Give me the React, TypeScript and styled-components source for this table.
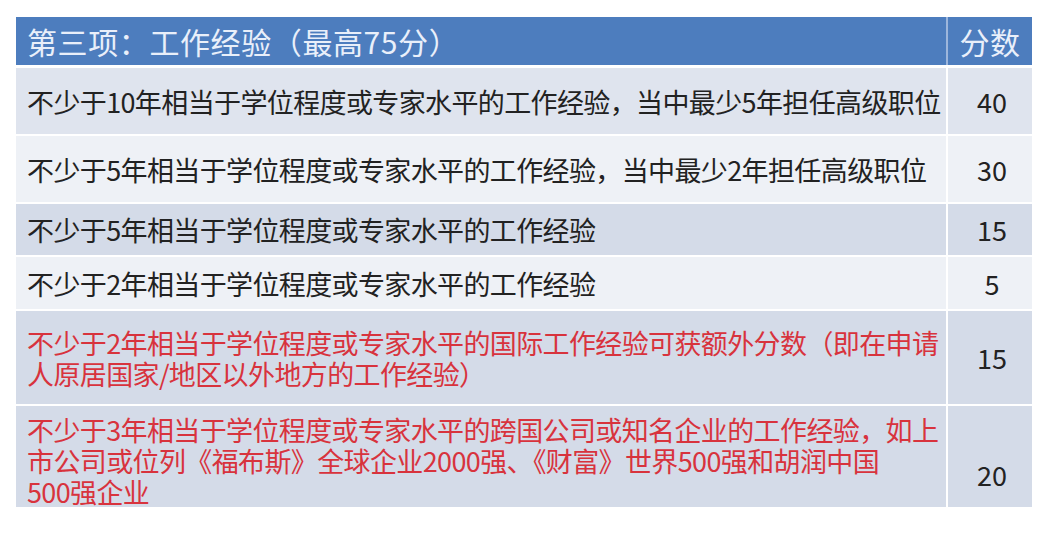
import styled, { createGlobalStyle } from 'styled-components'

type Tone = 'mid' | 'light' | 'dark'

type Item = {
  lines: string[]
  score: number
  tone: Tone
  red?: boolean
  height: number
  low?: boolean
}

const items: Item[] = [
  {
    lines: ['不少于10年相当于学位程度或专家水平的工作经验，当中最少5年担任高级职位'],
    score: 40,
    tone: 'mid',
    height: 66,
  },
  {
    lines: ['不少于5年相当于学位程度或专家水平的工作经验，当中最少2年担任高级职位'],
    score: 30,
    tone: 'light',
    height: 66,
  },
  {
    lines: ['不少于5年相当于学位程度或专家水平的工作经验'],
    score: 15,
    tone: 'dark',
    height: 51,
  },
  {
    lines: ['不少于2年相当于学位程度或专家水平的工作经验'],
    score: 5,
    tone: 'light',
    height: 52,
  },
  {
    lines: [
      '不少于2年相当于学位程度或专家水平的国际工作经验可获额外分数（即在申请',
      '人原居国家/地区以外地方的工作经验）',
    ],
    score: 15,
    tone: 'dark',
    red: true,
    height: 93,
  },
  {
    lines: [
      '不少于3年相当于学位程度或专家水平的跨国公司或知名企业的工作经验，如上',
      '市公司或位列《福布斯》全球企业2000强、《财富》世界500强和胡润中国',
      '500强企业',
    ],
    score: 20,
    tone: 'dark',
    red: true,
    height: 101,
    low: true,
  },
]

function App() {
  return (
    <>
      <GlobalStyle />
      <Page>
        <Table>
          <HeaderRow>
            <HeaderCell>第三项：工作经验（最高75分）</HeaderCell>
            <HeaderCell $center>分数</HeaderCell>
          </HeaderRow>
          {items.map((item, i) => (
            <Row key={i} $height={item.height}>
              <TextCell $tone={item.tone} $red={item.red} $low={item.low}>
                {item.lines.map((line, j) => (
                  <Line key={j}>{line}</Line>
                ))}
              </TextCell>
              <ScoreCell $tone={item.tone} $low={item.low}>
                {item.score}
              </ScoreCell>
            </Row>
          ))}
        </Table>
      </Page>
    </>
  )
}

export default App

const GlobalStyle = createGlobalStyle`
  body {
    margin: 0;
    background: #ffffff;
    font-family: "Noto Sans CJK SC", "Noto Sans", sans-serif;
  }
`

const tones: Record<Tone, string> = {
  mid: '#dfe4ee',
  light: '#eef1f6',
  dark: '#d4dbe8',
}

const Page = styled.div`
  padding: 17px 16px 0 16px;
  width: 1048px;
  height: 534px;
  box-sizing: border-box;
`

const Table = styled.div`
  width: 1016px;
  display: flex;
  flex-direction: column;
  gap: 2px;
`

const HeaderRow = styled.div`
  display: grid;
  grid-template-columns: 930px 84px;
  column-gap: 2px;
  height: 48px;
  margin-bottom: 1px;
  background: #9db6dc;
`

const HeaderCell = styled.div<{ $center?: boolean }>`
  display: flex;
  align-items: center;
  justify-content: ${({ $center }) => ($center ? 'center' : 'flex-start')};
  padding-left: ${({ $center }) => ($center ? '0' : '11px')};
  background: #4d7dbe;
  color: #e9effa;
  font-size: 30px;
  letter-spacing: 0.6px;
  line-height: 1;
`

const Row = styled.div<{ $height: number }>`
  display: grid;
  grid-template-columns: 930px 84px;
  column-gap: 2px;
  height: ${({ $height }) => $height}px;
`

const TextCell = styled.div<{ $tone: Tone; $red?: boolean; $low?: boolean }>`
  display: flex;
  flex-direction: column;
  justify-content: center;
  padding-left: 11px;
  padding-top: ${({ $low }) => ($low ? '8px' : '0')};
  background: ${({ $tone }) => tones[$tone]};
  color: ${({ $red }) => ($red ? '#d8333d' : '#222222')};
  font-size: 27px;
  line-height: 31px;
`

const Line = styled.span`
  white-space: nowrap;
  letter-spacing: -0.62px;
`

const ScoreCell = styled.div<{ $tone: Tone; $low?: boolean }>`
  display: flex;
  align-items: ${({ $low }) => ($low ? 'flex-end' : 'center')};
  justify-content: center;
  padding-bottom: ${({ $low }) => ($low ? '17px' : '0')};
  padding-left: 4px;
  background: ${({ $tone }) => tones[$tone]};
  color: #222222;
  font-size: 27px;
  line-height: 31px;
`
